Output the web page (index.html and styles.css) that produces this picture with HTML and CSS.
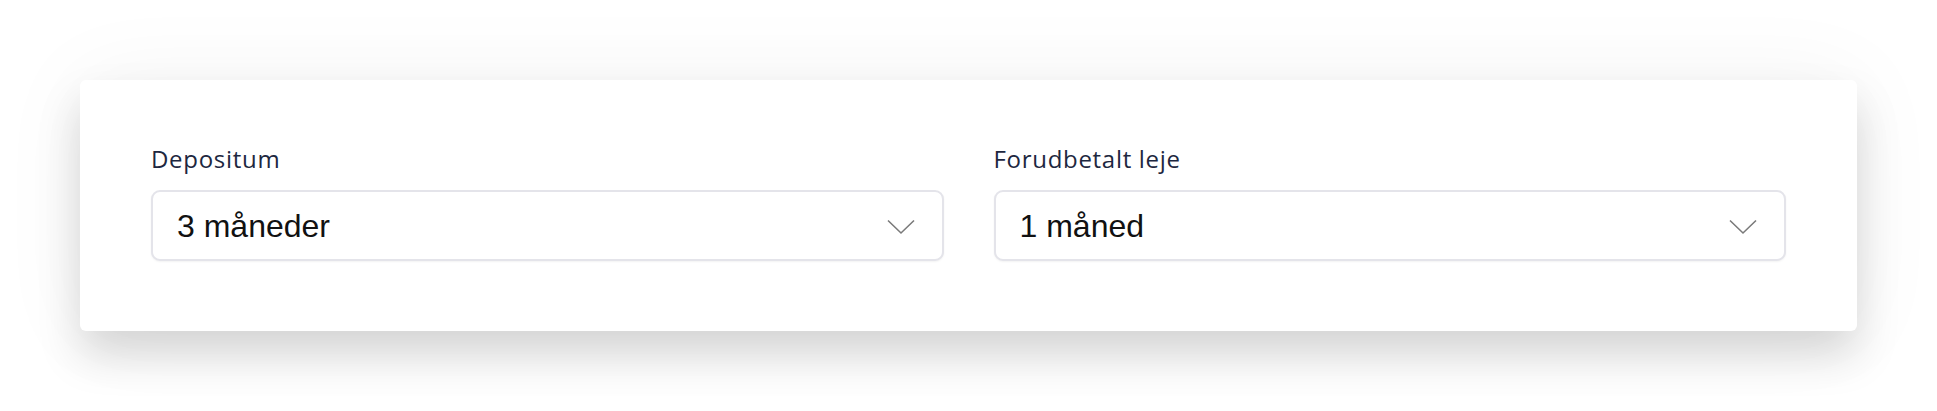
FILE: index.html
```html
<!DOCTYPE html>
<html lang="da">
<head>
<meta charset="utf-8">
<title>Depositum</title>
<link rel="stylesheet" href="styles.css">
</head>
<body>
<main class="page">
  <section class="card">
    <div class="field">
      <label class="label">Depositum</label>
      <div class="select">
        <span class="value">3 måneder</span>
        <svg class="chevron" width="28" height="16" viewBox="0 0 28 16" aria-hidden="true"><path d="M1 1.5 L14 14 L27 1.5" fill="none" stroke="#7a7a7a" stroke-width="1.6"/></svg>
      </div>
    </div>
    <div class="field">
      <label class="label">Forudbetalt leje</label>
      <div class="select">
        <span class="value">1 måned</span>
        <svg class="chevron" width="28" height="16" viewBox="0 0 28 16" aria-hidden="true"><path d="M1 1.5 L14 14 L27 1.5" fill="none" stroke="#7a7a7a" stroke-width="1.6"/></svg>
      </div>
    </div>
  </section>
</main>
</body>
</html>
```
FILE: styles.css
```css
html, body {
  margin: 0;
  padding: 0;
  background: #ffffff;
}
.page {
  box-sizing: border-box;
  min-height: 411px;
  padding: 80px 80px 79px 80px;
}
.card {
  box-sizing: border-box;
  width: 1777px;
  height: 251px;
  background: #ffffff;
  border-radius: 6px;
  box-shadow: 0 24px 44px rgba(0, 0, 0, 0.15), 0 0 90px rgba(0, 0, 0, 0.05);
  padding: 64px 71px 0 71px;
  display: grid;
  grid-template-columns: 1fr 1fr;
  column-gap: 50px;
}
.field {
  display: flex;
  flex-direction: column;
}
.label {
  font-family: "Open Sans", "Noto Sans", sans-serif;
  font-size: 24px;
  font-weight: 500;
  line-height: 30px;
  letter-spacing: 0.7px;
  color: #1d2740;
  margin-bottom: 16px;
}
.select {
  box-sizing: border-box;
  height: 71px;
  border: 2px solid #e4e4ea;
  border-radius: 9px;
  box-shadow: 0 1px 2px rgba(0, 0, 0, 0.05);
  display: flex;
  align-items: center;
  justify-content: space-between;
  padding: 2px 27px 0 24px;
  background: #ffffff;
}
.value {
  font-family: "Liberation Sans", Arial, sans-serif;
  font-size: 32px;
  color: #111111;
}
.chevron {
  display: block;
}
```
